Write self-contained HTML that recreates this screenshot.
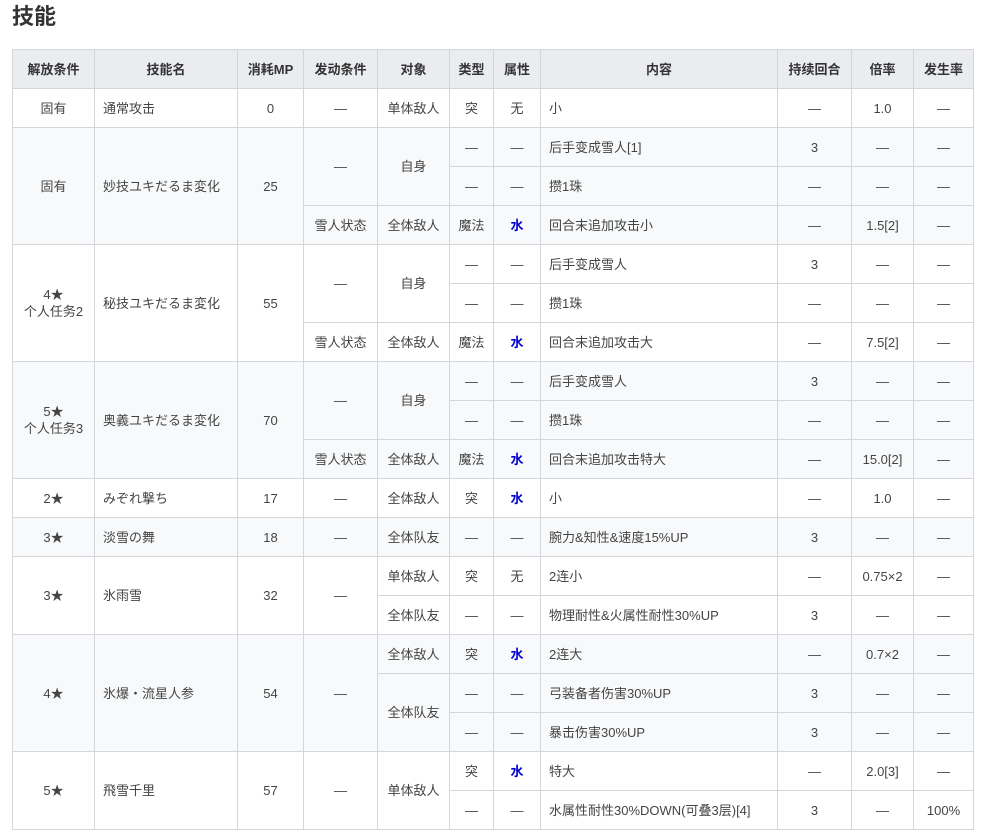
<!DOCTYPE html>
<html><head><meta charset="utf-8"><style>
body{margin:0;background:#fff;font-family:"Liberation Sans","Noto Sans CJK SC",sans-serif;color:#444;}
h2{position:absolute;left:12px;top:3px;margin:0;font-size:22px;line-height:28px;font-weight:bold;color:#333;}
table{position:absolute;left:12px;top:49px;border-collapse:collapse;table-layout:fixed;font-size:13px;line-height:17px;}
td,th{border:1px solid #d4d6da;height:38px;padding:0 8px;text-align:center;white-space:nowrap;overflow:hidden;vertical-align:middle;}
th{background:#eaecf0;font-weight:bold;color:#333;}
td.l{text-align:left;}
tr.g td{background:#f8f9fa;}
.w{color:#0000cc;font-weight:bold;}
</style></head><body>
<h2>技能</h2>
<table>
<colgroup><col style="width:82px"><col style="width:143px"><col style="width:66px"><col style="width:74px"><col style="width:72px"><col style="width:44px"><col style="width:47px"><col style="width:237px"><col style="width:74px"><col style="width:62px"><col style="width:60px"></colgroup>
<tr><th>解放条件</th><th>技能名</th><th>消耗MP</th><th>发动条件</th><th>对象</th><th>类型</th><th>属性</th><th>内容</th><th>持续回合</th><th>倍率</th><th>发生率</th></tr>
<tr><td>固有</td><td class="l">通常攻击</td><td>0</td><td>—</td><td>单体敌人</td><td>突</td><td>无</td><td class="l">小</td><td>—</td><td>1.0</td><td>—</td></tr>
<tr class="g"><td rowspan="3">固有</td><td rowspan="3" class="l">妙技ユキだるま変化</td><td rowspan="3">25</td><td rowspan="2">—</td><td rowspan="2">自身</td><td>—</td><td>—</td><td class="l">后手变成雪人[1]</td><td>3</td><td>—</td><td>—</td></tr>
<tr class="g"><td>—</td><td>—</td><td class="l">攒1珠</td><td>—</td><td>—</td><td>—</td></tr>
<tr class="g"><td>雪人状态</td><td>全体敌人</td><td>魔法</td><td class="w">水</td><td class="l">回合末追加攻击小</td><td>—</td><td>1.5[2]</td><td>—</td></tr>
<tr><td rowspan="3">4★<br>个人任务2</td><td rowspan="3" class="l">秘技ユキだるま変化</td><td rowspan="3">55</td><td rowspan="2">—</td><td rowspan="2">自身</td><td>—</td><td>—</td><td class="l">后手变成雪人</td><td>3</td><td>—</td><td>—</td></tr>
<tr><td>—</td><td>—</td><td class="l">攒1珠</td><td>—</td><td>—</td><td>—</td></tr>
<tr><td>雪人状态</td><td>全体敌人</td><td>魔法</td><td class="w">水</td><td class="l">回合末追加攻击大</td><td>—</td><td>7.5[2]</td><td>—</td></tr>
<tr class="g"><td rowspan="3">5★<br>个人任务3</td><td rowspan="3" class="l">奥義ユキだるま変化</td><td rowspan="3">70</td><td rowspan="2">—</td><td rowspan="2">自身</td><td>—</td><td>—</td><td class="l">后手变成雪人</td><td>3</td><td>—</td><td>—</td></tr>
<tr class="g"><td>—</td><td>—</td><td class="l">攒1珠</td><td>—</td><td>—</td><td>—</td></tr>
<tr class="g"><td>雪人状态</td><td>全体敌人</td><td>魔法</td><td class="w">水</td><td class="l">回合末追加攻击特大</td><td>—</td><td>15.0[2]</td><td>—</td></tr>
<tr><td>2★</td><td class="l">みぞれ撃ち</td><td>17</td><td>—</td><td>全体敌人</td><td>突</td><td class="w">水</td><td class="l">小</td><td>—</td><td>1.0</td><td>—</td></tr>
<tr class="g"><td>3★</td><td class="l">淡雪の舞</td><td>18</td><td>—</td><td>全体队友</td><td>—</td><td>—</td><td class="l">腕力&amp;知性&amp;速度15%UP</td><td>3</td><td>—</td><td>—</td></tr>
<tr><td rowspan="2">3★</td><td rowspan="2" class="l">氷雨雪</td><td rowspan="2">32</td><td rowspan="2">—</td><td>单体敌人</td><td>突</td><td>无</td><td class="l">2连小</td><td>—</td><td>0.75×2</td><td>—</td></tr>
<tr><td>全体队友</td><td>—</td><td>—</td><td class="l">物理耐性&amp;火属性耐性30%UP</td><td>3</td><td>—</td><td>—</td></tr>
<tr class="g"><td rowspan="3">4★</td><td rowspan="3" class="l">氷爆・流星人参</td><td rowspan="3">54</td><td rowspan="3">—</td><td>全体敌人</td><td>突</td><td class="w">水</td><td class="l">2连大</td><td>—</td><td>0.7×2</td><td>—</td></tr>
<tr class="g"><td rowspan="2">全体队友</td><td>—</td><td>—</td><td class="l">弓装备者伤害30%UP</td><td>3</td><td>—</td><td>—</td></tr>
<tr class="g"><td>—</td><td>—</td><td class="l">暴击伤害30%UP</td><td>3</td><td>—</td><td>—</td></tr>
<tr><td rowspan="2">5★</td><td rowspan="2" class="l">飛雪千里</td><td rowspan="2">57</td><td rowspan="2">—</td><td rowspan="2">单体敌人</td><td>突</td><td class="w">水</td><td class="l">特大</td><td>—</td><td>2.0[3]</td><td>—</td></tr>
<tr><td>—</td><td>—</td><td class="l">水属性耐性30%DOWN(可叠3层)[4]</td><td>3</td><td>—</td><td>100%</td></tr>
</table>
</body></html>
